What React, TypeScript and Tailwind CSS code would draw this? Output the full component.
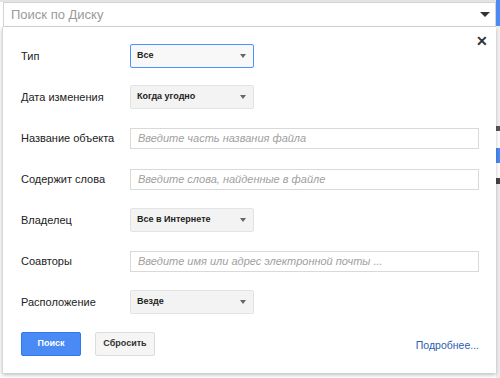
import React from "react";

const font = { fontFamily: '"Liberation Sans", Arial, sans-serif' };

function Arrow() {
  return <span className="h-0 w-0 border-x-[3.5px] border-t-[4px] border-x-transparent border-t-[#666]" />;
}

function Select({ value, focused }: { value: string; focused?: boolean }) {
  return (
    <div
      className={
        "flex h-[24px] w-[124px] items-center justify-between rounded-[2px] border pl-[6px] pr-[7px] text-[9px] font-bold text-[#222] " +
        (focused ? "border-[#4d90fe] bg-[#f8f8f8]" : "border-[#e3e3e3] bg-[#f3f3f3]")
      }
    >
      <span>{value}</span>
      <Arrow />
    </div>
  );
}

function Field({ placeholder }: { placeholder: string }) {
  return (
    <div className="flex h-[21px] w-[349px] items-center border border-[#d9d9d9] bg-white px-[7px] text-[11px] italic text-[#a0a0a0]">
      {placeholder}
    </div>
  );
}

function Row({ label, children }: { label: string; children: React.ReactNode }) {
  return (
    <div className="flex h-[24px] items-center">
      <div className="w-[109px] whitespace-nowrap text-[11px] text-[#222]">{label}</div>
      {children}
    </div>
  );
}

export default function App() {
  return (
    <div className="flex h-[378px] w-[500px] overflow-hidden bg-white" style={font}>
      <div className="flex w-[496px] flex-col">
        <div className="h-[2px] bg-[#e4e4e4]" />
        <div className="ml-[3px] flex h-[25px] items-center justify-between border border-[#d4d4d4] bg-white pl-[7px] pr-[5px]">
          <span className="text-[13px] text-[#9a9a9a]">Поиск по Диску</span>
          <span className="h-0 w-0 border-x-[5px] border-t-[5px] border-x-transparent border-t-[#333]" />
        </div>
        <div className="relative ml-[2px] flex h-[346px] flex-col border-l border-[#d8d8d8] bg-white pl-[18px] pr-[17px] pt-[17px] shadow-[0_2px_4px_rgba(0,0,0,0.25)]">
          <span className="absolute right-[8px] top-[7px] text-[14px] font-bold leading-none text-[#333]">✕</span>
          <div className="flex flex-col gap-[17px]">
            <Row label="Тип">
              <Select value="Все" focused />
            </Row>
            <Row label="Дата изменения">
              <Select value="Когда угодно" />
            </Row>
            <Row label="Название объекта">
              <Field placeholder="Введите часть названия файла" />
            </Row>
            <Row label="Содержит слова">
              <Field placeholder="Введите слова, найденные в файле" />
            </Row>
            <Row label="Владелец">
              <Select value="Все в Интернете" />
            </Row>
            <Row label="Соавторы">
              <Field placeholder="Введите имя или адрес электронной почты ..." />
            </Row>
            <Row label="Расположение">
              <Select value="Везде" />
            </Row>
          </div>
          <div className="mt-[18px] flex items-center">
            <button className="h-[24px] w-[60px] rounded-[2px] border border-[#3079ed] bg-[#4a8af4] text-[9px] font-bold text-white">
              Поиск
            </button>
            <button className="ml-[14px] h-[24px] w-[60px] rounded-[2px] border border-[#dcdcdc] bg-[#f5f5f5] text-[9px] font-bold text-[#333]">
              Сбросить
            </button>
            <span className="ml-auto mt-[4px] text-[10.5px] text-[#2a5db0]">Подробнее...</span>
          </div>
        </div>
      </div>
      <div className="flex w-[4px] flex-col">
        <div className="h-[26px] bg-[#4a8af4]" />
        <div className="h-[100px] bg-[#f2f2f2]" />
        <div className="h-[5px] bg-[#555]" />
        <div className="h-[17px] bg-white" />
        <div className="h-[15px] bg-[#4a8af4]" />
        <div className="h-[15px] bg-white" />
        <div className="h-[6px] bg-[#444]" />
        <div className="flex-1 bg-[#eee]" />
      </div>
    </div>
  );
}
